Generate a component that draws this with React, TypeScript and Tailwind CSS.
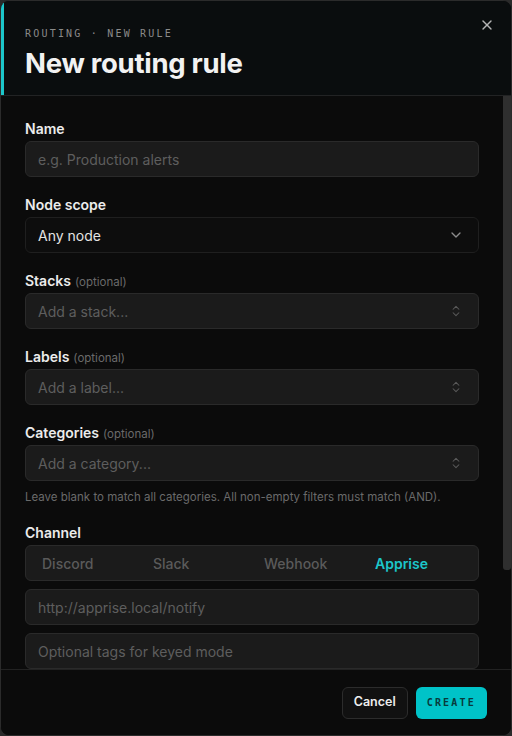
import React from "react";
import { X, ChevronDown, ChevronsUpDown } from "lucide-react";

const sans = "font-['Inter','Noto_Sans',sans-serif]";
const mono = "font-['DejaVu_Sans_Mono','Liberation_Mono',monospace]";

function Label({ text, optional }: { text: string; optional?: boolean }) {
  return (
    <div className="mb-0.5 flex h-5 items-baseline gap-1 overflow-hidden leading-5">
      <span className="text-[14px] font-semibold text-[#ececec]">{text}</span>
      {optional && <span className="text-[11.5px] text-[#6a6a6a]">(optional)</span>}
    </div>
  );
}

function TextInput({ placeholder }: { placeholder: string }) {
  return (
    <div className="flex h-9 items-center rounded-md border border-[#2a2a2a] bg-[#1b1b1b] px-3 text-[14px] text-[#5e5e5e]">
      {placeholder}
    </div>
  );
}

function Combo({ placeholder }: { placeholder: string }) {
  return (
    <div className="flex h-9 items-center justify-between rounded-md border border-[#2a2a2a] bg-[#1b1b1b] pl-3 pr-[15px] text-[14px] text-[#5e5e5e]">
      <span>{placeholder}</span>
      <ChevronsUpDown size={14} strokeWidth={1.75} className="text-[#5a5a5a]" />
    </div>
  );
}

const channels = ["Discord", "Slack", "Webhook", "Apprise"];

export default function App() {
  return (
    <div className={`h-[736px] w-[512px] bg-[#2a2a2a] ${sans}`}>
      <div className="flex h-full flex-col overflow-hidden rounded-[9px] border border-[#2b2b2b] bg-[#0b0b0b]">
        {/* header */}
        <div className="relative h-[95px] shrink-0 border-b border-[#222324] bg-[#0a0d0e] pl-6 pt-[27px] shadow-[inset_3px_0_0_#1cc6ca]">
          <div className={`${mono} text-[10px] leading-3 tracking-[0.22em] text-[#8a8a8a]`}>
            ROUTING · NEW RULE
          </div>
          <div className="mt-[7px] text-[27.5px] font-bold leading-8 tracking-[-0.01em] text-[#f2f2f2]">
            New routing rule
          </div>
          <button className="absolute right-[16px] top-[16px] text-[#b5b5b5]">
            <X size={16} strokeWidth={2} />
          </button>
        </div>

        {/* form body with its scroll bar */}
        <div className="flex min-h-0 flex-1">
          <div className="min-w-0 flex-1 overflow-hidden">
            <div className="flex flex-col gap-[18px] pl-6 pr-6 pt-[23px]">
              <div>
                <Label text="Name" />
                <TextInput placeholder="e.g. Production alerts" />
              </div>
              <div>
                <Label text="Node scope" />
                <div className="flex h-9 items-center justify-between rounded-md border border-[#1f1f1f] bg-[#0d0d0d] pl-3 pr-[14px] text-[14px] text-[#e4e4e4]">
                  <span>Any node</span>
                  <ChevronDown size={16} strokeWidth={2} className="text-[#8c8c8c]" />
                </div>
              </div>
              <div>
                <Label text="Stacks" optional />
                <Combo placeholder="Add a stack..." />
              </div>
              <div>
                <Label text="Labels" optional />
                <Combo placeholder="Add a label..." />
              </div>
              <div>
                <Label text="Categories" optional />
                <Combo placeholder="Add a category..." />
                <p className="mt-2 text-[11.5px] leading-4 text-[#6a6a6a]">
                  Leave blank to match all categories. All non-empty filters must match (AND).
                </p>
              </div>
              <div>
                <Label text="Channel" />
                <div className="grid h-9 grid-cols-4 items-center rounded-md border border-[#2a2a2a] bg-[#1b1b1b] px-1 text-[14px]">
                  {channels.map((c) => (
                    <span
                      key={c}
                      className={
                        c === "Apprise"
                          ? "pl-3 font-semibold text-[#1cc6ca]"
                          : "pl-3 font-medium text-[#5a5a5a]"
                      }
                    >
                      {c}
                    </span>
                  ))}
                </div>
                <div className="mt-2 flex flex-col gap-2">
                  <TextInput placeholder="http://apprise.local/notify" />
                  <TextInput placeholder="Optional tags for keyed mode" />
                </div>
              </div>
            </div>
          </div>
          <div className="w-2 shrink-0">
            <div className="h-[474px] rounded-b-[3px] bg-[#2f2f2f]" />
          </div>
        </div>

        {/* footer */}
        <div className="flex h-[66px] shrink-0 items-center justify-end gap-2 border-t border-[#222222] bg-[#0b0b0b] pr-6">
          <button className="h-8 rounded-md border border-[#2c2c2c] bg-[#111111] px-[11px] text-[12.5px] font-semibold text-[#ededed]">
            Cancel
          </button>
          <button className={`h-8 rounded-md bg-[#00c3c8] px-[11px] ${mono} text-[10px] font-bold tracking-[0.22em] text-[#083a3c]`}>
            CREATE
          </button>
        </div>
      </div>
    </div>
  );
}
